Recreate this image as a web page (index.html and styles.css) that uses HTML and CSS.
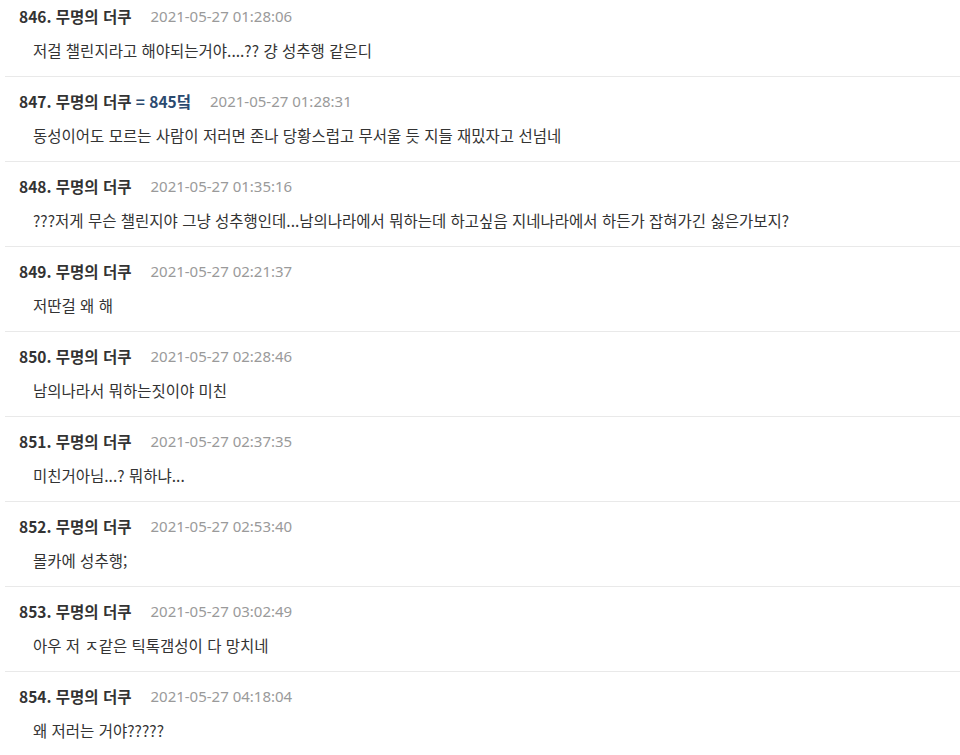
FILE: index.html
```html
<!DOCTYPE html>
<html lang="ko">
<head>
<meta charset="utf-8">
<link rel="stylesheet" href="styles.css">
</head>
<body>
<div class="thread">
  <div class="reply">
    <div class="meta"><span class="name">846. 무명의 더쿠</span><span class="date">2021-05-27 01:28:06</span></div>
    <div class="text">저걸 챌린지라고 해야되는거야....?? 걍 성추행 같은디</div>
  </div>
  <div class="reply">
    <div class="meta"><span class="name">847. 무명의 더쿠 <span class="ref">= 845덬</span></span><span class="date">2021-05-27 01:28:31</span></div>
    <div class="text">동성이어도 모르는 사람이 저러면 존나 당황스럽고 무서울 듯 지들 재밌자고 선넘네</div>
  </div>
  <div class="reply">
    <div class="meta"><span class="name">848. 무명의 더쿠</span><span class="date">2021-05-27 01:35:16</span></div>
    <div class="text">???저게 무슨 챌린지야 그냥 성추행인데...남의나라에서 뭐하는데 하고싶음 지네나라에서 하든가 잡혀가긴 싫은가보지?</div>
  </div>
  <div class="reply">
    <div class="meta"><span class="name">849. 무명의 더쿠</span><span class="date">2021-05-27 02:21:37</span></div>
    <div class="text">저딴걸 왜 해</div>
  </div>
  <div class="reply">
    <div class="meta"><span class="name">850. 무명의 더쿠</span><span class="date">2021-05-27 02:28:46</span></div>
    <div class="text">남의나라서 뭐하는짓이야 미친</div>
  </div>
  <div class="reply">
    <div class="meta"><span class="name">851. 무명의 더쿠</span><span class="date">2021-05-27 02:37:35</span></div>
    <div class="text">미친거아님...? 뭐하냐...</div>
  </div>
  <div class="reply">
    <div class="meta"><span class="name">852. 무명의 더쿠</span><span class="date">2021-05-27 02:53:40</span></div>
    <div class="text">몰카에 성추행;</div>
  </div>
  <div class="reply">
    <div class="meta"><span class="name">853. 무명의 더쿠</span><span class="date">2021-05-27 03:02:49</span></div>
    <div class="text">아우 저 ㅈ같은 틱톡갬성이 다 망치네</div>
  </div>
  <div class="reply">
    <div class="meta"><span class="name">854. 무명의 더쿠</span><span class="date">2021-05-27 04:18:04</span></div>
    <div class="text">왜 저러는 거야?????</div>
  </div>
</div>
</body>
</html>
```
FILE: styles.css
```css
html, body {
  margin: 0;
  padding: 0;
  background: #ffffff;
}
body {
  font-family: "Noto Sans CJK KR", "Noto Sans", sans-serif;
  font-size: 15.5px;
  line-height: 20px;
  color: #333333;
  overflow: hidden;
}
.thread {
  display: flex;
  flex-direction: column;
  margin-left: 5px;
}
.reply {
  display: flex;
  flex-direction: column;
  gap: 14px;
  padding: 14px 0 16px 14px;
  border-bottom: 1px solid #e9e9e9;
}
.reply:first-child {
  padding-top: 6px;
}
.meta {
  display: flex;
  align-items: center;
  gap: 19px;
}
.name {
  font-weight: bold;
  color: #333333;
}
.ref {
  color: #2b4a6f;
}
.date {
  font-family: "Noto Sans", "Noto Sans CJK KR", sans-serif;
  font-size: 15px;
  color: #9a9a9a;
}
.text {
  padding-left: 14px;
  color: #333333;
}
```
